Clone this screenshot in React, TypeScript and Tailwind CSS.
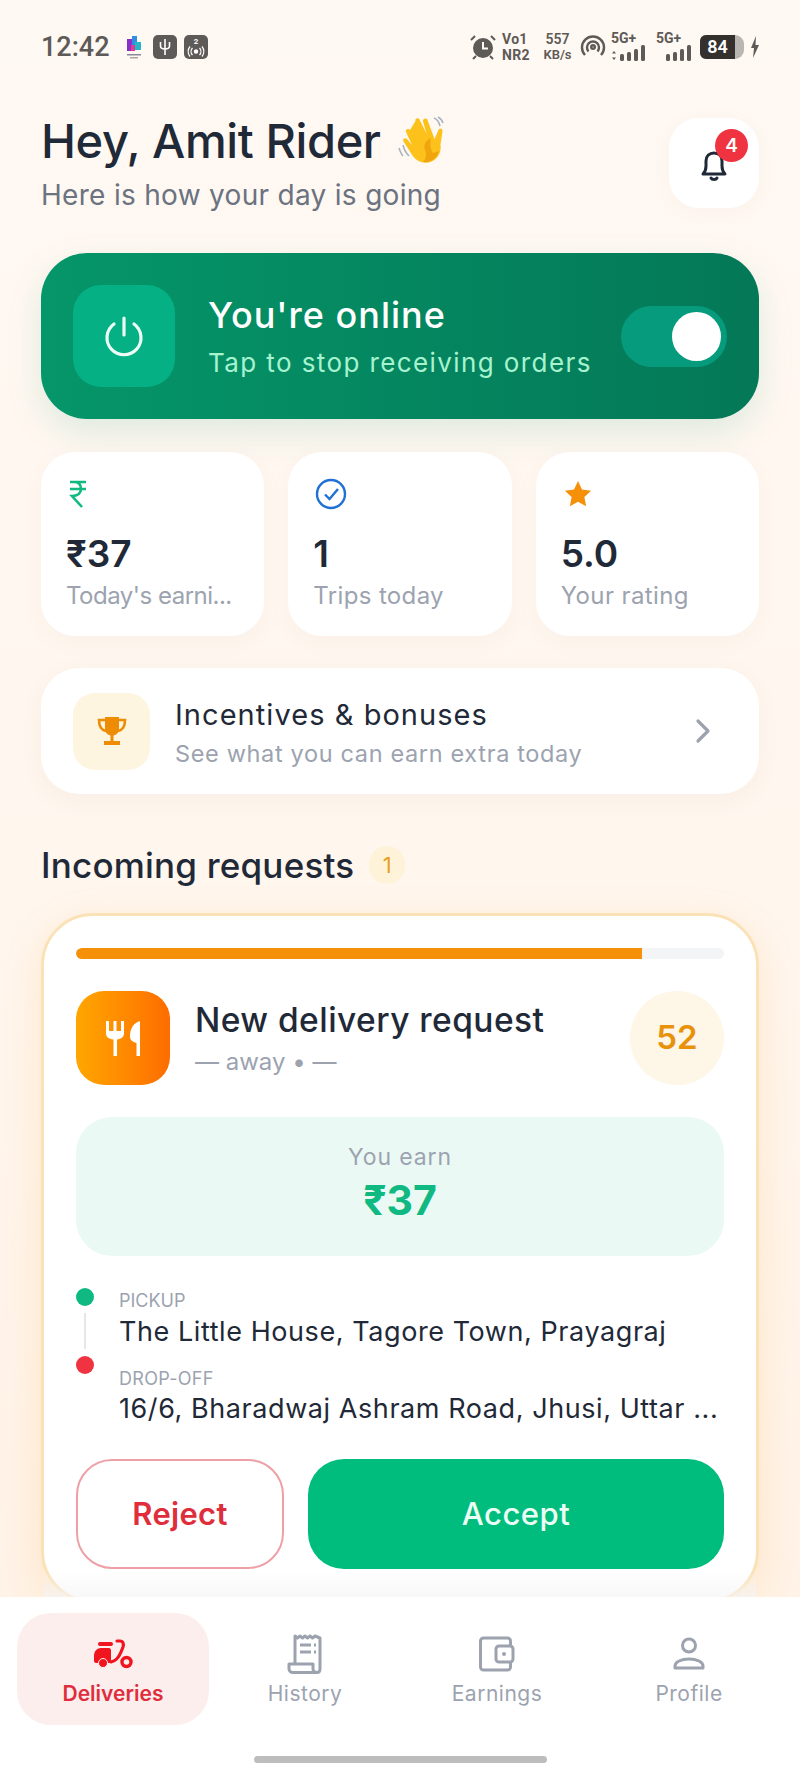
import React from "react";

const StatusBar = () => (
  <div className="flex h-[92px] shrink-0 items-center justify-between pl-[41px] pr-[40px] pt-[2px] text-[#5e5a57] font-['Roboto',sans-serif]">
    <div className="flex items-center">
      <span className="w-[84px] text-[27px] font-medium leading-none">12:42</span>
      <svg width="20" height="24" viewBox="0 0 20 24" className="ml-[-1px]">
        <rect x="3" y="4" width="5" height="12" fill="#8b2fc9" />
        <rect x="8" y="1" width="5" height="9" fill="#2f8fe0" />
        <rect x="11" y="7" width="6" height="8" fill="#27b5c9" />
        <rect x="7" y="10" width="4" height="6" fill="#e23a8f" />
        <rect x="3" y="19" width="14" height="1.5" fill="#8a8a9a" />
        <rect x="6" y="22" width="8" height="1.5" fill="#b0a0a0" />
      </svg>
      <div className="ml-[9px] flex h-[24px] w-[24px] items-center justify-center rounded-[5px] bg-[#5e5a57]">
        <svg width="14" height="18" viewBox="0 0 14 18" fill="none" stroke="#fff" strokeWidth="1.6">
          <path d="M7 1v16M2.5 4v4c0 2 2 3 4.500 3s4.500-1 4.500-3V4" />
        </svg>
      </div>
      <div className="ml-[7px] flex h-[24px] w-[24px] flex-col items-center justify-center rounded-[5px] bg-[#5e5a57]">
        <span className="text-[8px] font-bold leading-[8px] text-white">2</span>
        <svg width="18" height="11" viewBox="0 0 18 11" fill="none" stroke="#fff" strokeWidth="1.3">
          <circle cx="9" cy="5.5" r="1.6" fill="#fff" />
          <path d="M5.500 2a5 5 0 0 0 0 7M12.500 2a5 5 0 0 1 0 7M3 0.500a8 8 0 0 0 0 10M15 0.500a8 8 0 0 1 0 10" />
        </svg>
      </div>
    </div>
    <div className="flex items-center">
      <svg width="26" height="26" viewBox="0 0 26 26" fill="#5e5a57">
        <circle cx="13" cy="14" r="10" />
        <path d="M13 8v6.500h5" fill="none" stroke="#fff9f3" strokeWidth="2" />
        <path d="M1 6l4-4M25 6l-4-4M6 22l-3 3M20 22l3 3" stroke="#5e5a57" strokeWidth="2" />
      </svg>
      <div className="ml-[6px] flex w-[30px] flex-col text-[14px] font-bold leading-[16px] tracking-[0.3px]">
        <span>Vo1</span>
        <span>NR2</span>
      </div>
      <div className="ml-[11px] flex w-[29px] flex-col text-center text-[13px] font-semibold leading-[16px]">
        <span className="text-[14px]">557</span>
        <span>KB/s</span>
      </div>
      <svg width="26" height="26" viewBox="0 0 26 26" fill="none" stroke="#5e5a57" strokeWidth="2.4" className="ml-[8px]">
        <path d="M5 21a11 11 0 1 1 16 0" />
        <path d="M8.500 17.500a6 6 0 1 1 9 0" />
        <circle cx="13" cy="13" r="1.8" />
      </svg>
      <div className="ml-[5px] flex w-[38px] flex-col">
        <span className="text-[14px] font-bold leading-[13px]">5G+</span>
        <svg width="38" height="17" viewBox="0 0 38 17" fill="#5e5a57">
          <path d="M3 6l2 2.500H1zM3 15l-2-2.500h4z" />
          <rect x="9" y="9" width="4" height="7" rx="1.5" />
          <rect x="16" y="7" width="4" height="9" rx="1.5" />
          <rect x="23" y="4" width="4" height="12" rx="1.5" />
          <rect x="30" y="0" width="4" height="16" rx="1.5" />
        </svg>
      </div>
      <div className="ml-[7px] flex w-[38px] flex-col">
        <span className="text-[14px] font-bold leading-[13px]">5G+</span>
        <svg width="38" height="17" viewBox="0 0 38 17" fill="#5e5a57">
          <rect x="10" y="9" width="4" height="7" rx="1.5" />
          <rect x="17" y="7" width="4" height="9" rx="1.5" />
          <rect x="24" y="4" width="4" height="12" rx="1.5" />
          <rect x="31" y="0" width="4" height="16" rx="1.5" />
        </svg>
      </div>
      <div className="ml-[6px] flex h-[24px] w-[44px] overflow-hidden rounded-l-[6px] rounded-r-[9px] bg-[#b9b5b1]">
        <div className="flex w-[35px] items-center justify-center bg-[#33302e] text-[18px] font-semibold leading-none text-white">84</div>
      </div>
      <svg width="10" height="24" viewBox="0 0 10 24" fill="#5e5a57" className="ml-[6px]">
        <path d="M6 1L1 13h3l-1 10 6-13H5.500z" />
      </svg>
    </div>
  </div>
);

const Wave = () => (
  <svg width="50" height="50" viewBox="0 0 50 50" className="ml-[16px]">
    <path d="M6 30c1 5 3 8 6 11M2 33c1 3 2 6 4 8" fill="none" stroke="#aab4c0" strokeWidth="1.6" />
    <path d="M37 3c3 1 5 4 6 8M41 2c2 1 4 3 5 6" fill="none" stroke="#aab4c0" strokeWidth="1.6" />
    <path
      d="M13 15c-1.500-2-5-.5-4 2l6 13-5-6c-2-2-5 0-3.500 2.500l9 14c4 6 12 9 19 6 7-3 10-10 9-17l2-13c.3-3-3-4-4-1.500l-4 9-7-19c-1-2.500-5-1.500-4.500 1.500l3.500 12-7-14c-1-2.500-5-1-4 1.500z"
      fill="#fcc21b"
    />
    <path d="M34 23c-5 2-8 7-6 12 2 5 1 9-2 12 8 1 14-4 16-11l-6 2c-3-4-3-10-2-15z" fill="#f0a50f" />
  </svg>
);

const Stat = ({ icon, value, label, labelClass }: { icon: React.ReactNode; value: string; label: string; labelClass: string }) => (
  <div className="h-[184px] min-w-0 rounded-[34px] bg-white pl-[25px] pt-[27px] shadow-[0_6px_24px_rgba(120,80,40,0.04)]">
    <div className="flex h-[30px] items-center">{icon}</div>
    <div className="mt-[22px] text-[37px] font-semibold leading-[46px] text-[#1f2937]">{value}</div>
    <div className={`mt-[3px] whitespace-nowrap text-[24px] leading-[32px] text-[#9ca3af] ${labelClass}`}>{label}</div>
  </div>
);

const NavItem = ({ icon, label, active }: { icon: React.ReactNode; label: string; active?: boolean }) => (
  <div className={`flex h-[112px] w-[192px] flex-col items-center rounded-[34px] pt-[22px] ${active ? "bg-[#fdeeee]" : ""}`}>
    <div className="flex h-[38px] items-center justify-center">{icon}</div>
    <span className={`mt-[7px] text-[21px] leading-[28px] ${active ? "font-semibold text-[#e02d3c]" : "tracking-[0.5px] text-[#9ca3af]"}`}>{label}</span>
  </div>
);

export default function App() {
  return (
    <div className="relative flex h-[1778px] w-[800px] flex-col overflow-hidden bg-gradient-to-b from-[#fff9f3] via-[#fff6ee] to-[#fff1e4] font-['Inter',sans-serif]">
      <StatusBar />

      <main className="min-h-0 flex-1 overflow-hidden px-[41px]">
        {/* Header */}
        <div className="mt-[26px] flex h-[90px] items-start justify-between">
          <div className="mt-[-6px]">
            <div className="flex h-[56px] items-center">
              <h1 className="text-[47px] font-medium leading-none tracking-[-0.4px] text-[#1f2937]">Hey, Amit Rider</h1>
              <Wave />
            </div>
            <p className="mt-[9px] text-[28px] leading-[36px] tracking-[0.3px] text-[#6b7280]">Here is how your day is going</p>
          </div>
          <div className="relative flex h-[90px] w-[90px] items-center justify-center rounded-[30px] bg-white shadow-[0_4px_20px_rgba(120,80,40,0.04)]">
            <svg width="32" height="36" viewBox="0 0 32 36" fill="none" stroke="#1f2937" strokeWidth="3" className="mt-[4px]">
              <path d="M5 27c2-2 3-4 3-8v-5c0-5 3.500-8 8-8s8 3 8 8v5c0 4 1 6 3 8z" strokeLinejoin="round" />
              <path d="M13 31c1 2 5 2 6 0" strokeLinecap="round" />
            </svg>
            <span className="absolute left-[46px] top-[11px] flex h-[33px] w-[33px] items-center justify-center rounded-full bg-[#ef3340] text-[19px] font-semibold leading-none text-white">4</span>
          </div>
        </div>

        {/* Online toggle */}
        <div className="mt-[45px] flex h-[166px] items-center rounded-[46px] bg-gradient-to-r from-[#059669] to-[#047857] pl-[32px] pr-[32px] shadow-[0_14px_36px_rgba(5,150,105,0.13)]">
          <div className="flex h-[102px] w-[102px] items-center justify-center rounded-[28px] bg-[#06b085]">
            <svg width="44" height="44" viewBox="0 0 44 44" fill="none" stroke="#ecfdf5" strokeWidth="3.2" strokeLinecap="round">
              <path d="M22 4v17" />
              <path d="M12 10a17 17 0 1 0 20 0" />
            </svg>
          </div>
          <div className="ml-[33px] flex-1">
            <div className="text-[36px] font-medium leading-[44px] tracking-[1px] text-white">You're online</div>
            <div className="mt-[9px] text-[26px] leading-[34px] tracking-[1.4px] text-[#a7f3d0]">Tap to stop receiving orders</div>
          </div>
          <div className="flex h-[61px] w-[106px] items-center justify-end rounded-full bg-[#079b7d] pr-[6px]">
            <div className="h-[49px] w-[49px] rounded-full bg-white" />
          </div>
        </div>

        {/* Stats */}
        <div className="mt-[33px] grid grid-cols-3 gap-[24px]">
          <Stat
            value="₹37"
            label="Today's earni..."
            labelClass="tracking-[-0.5px]"
            icon={
              <svg width="20" height="30" viewBox="0 0 20 30" fill="none" stroke="#10b981" strokeWidth="2.6" className="ml-[2px]">
                <path d="M2 3h16M2 10h16M6 3c5 0 7 3 7 7s-3 7-9 7l10 11" />
              </svg>
            }
          />
          <Stat
            value="1"
            label="Trips today"
            labelClass="tracking-[0.35px]"
            icon={
              <svg width="32" height="32" viewBox="0 0 32 32" fill="none" stroke="#2170d6" strokeWidth="2.4" className="ml-[2px]">
                <circle cx="16" cy="16" r="14" />
                <path d="M10 16.500l4.500 4.500L23 11" />
              </svg>
            }
          />
          <Stat
            value="5.0"
            label="Your rating"
            labelClass="tracking-[0.4px]"
            icon={
              <svg width="30" height="30" viewBox="0 0 24 24" fill="#f59008" className="ml-[2px]">
                <path d="M12 1.500l3.200 6.900 7.300.9-5.400 5.100 1.400 7.400L12 18.200l-6.500 3.600 1.400-7.400L1.500 9.300l7.300-.9z" />
              </svg>
            }
          />
        </div>

        {/* Incentives */}
        <div className="mt-[32px] flex h-[126px] items-center rounded-[38px] bg-white pl-[32px] pr-[48px] shadow-[0_6px_24px_rgba(120,80,40,0.05)]">
          <div className="flex h-[77px] w-[77px] items-center justify-center rounded-[22px] bg-[#fef5e0]">
            <svg width="32" height="32" viewBox="0 0 32 32" fill="#ee8c06">
              <path d="M9 2h14v12c0 4-3 6.500-7 6.500S9 18 9 14z" />
              <path d="M9 5H3c0 6 2 10 7 11M23 5h6c0 6-2 10-7 11" fill="none" stroke="#ee8c06" strokeWidth="2.600" />
              <rect x="14.500" y="20" width="3" height="6" />
              <rect x="8" y="26" width="16" height="4" />
            </svg>
          </div>
          <div className="ml-[25px] flex-1 pt-[3px]">
            <div className="text-[29px] leading-[38px] tracking-[1.05px] text-[#1f2937]">Incentives &amp; bonuses</div>
            <div className="mt-[4px] text-[23.500px] leading-[32px] tracking-[0.65px] text-[#9ca3af]">See what you can earn extra today</div>
          </div>
          <svg width="16" height="26" viewBox="0 0 16 26" fill="none" stroke="#9ca3af" strokeWidth="3.2" strokeLinecap="round" strokeLinejoin="round">
            <path d="M3 3l10 10-10 10" />
          </svg>
        </div>

        {/* Requests */}
        <div className="mt-[52px] flex h-[38px] items-center">
          <h2 className="text-[35px] font-medium leading-none tracking-[0.2px] text-[#1f2937]">Incoming requests</h2>
          <span className="ml-[15px] flex h-[38px] w-[36px] items-center justify-center rounded-full bg-[#fef3d8] text-[22px] leading-none text-[#e8a020]">1</span>
        </div>

        <div className="mt-[29px] h-[690px] rounded-[52px] border-[3px] border-[#fbe2b6] bg-white px-[32px] pt-[32px] shadow-[0_10px_40px_rgba(245,158,11,0.14)]">
          <div className="h-[11px] overflow-hidden rounded-full bg-[#f3f4f6]">
            <div className="h-full w-[87.300%] rounded-l-full bg-[#f59008]" />
          </div>

          <div className="mt-[32px] flex items-center">
            <div className="flex h-[94px] w-[94px] items-center justify-center rounded-[28px] bg-gradient-to-r from-[#ffa600] to-[#fd6c00]">
              <svg width="34" height="35" viewBox="0 0 34 35" fill="#fff">
                <path d="M0 0h3v10h4.500V0h3v10H15V0h3v12c0 4-2.500 6-7 6.500V35H7.500V18.500C2.500 18 0 16 0 12z" />
                <path d="M34 0v35h-3.500V22c-4-1-7-3-6.500-8 .5-6 3-12 10-14z" />
              </svg>
            </div>
            <div className="ml-[25px] flex-1">
              <div className="text-[33.500px] font-medium leading-[44px] tracking-[0.45px] text-[#1f2937]">New delivery request</div>
              <div className="mt-[4px] text-[24px] leading-[32px] text-[#9ca3af]">— away • —</div>
            </div>
            <div className="flex h-[94px] w-[94px] items-center justify-center rounded-full bg-[#fef6e7] pb-[2px] text-[33px] font-semibold leading-none text-[#e8920c]">52</div>
          </div>

          <div className="mt-[32px] flex h-[139px] flex-col items-center justify-center rounded-[36px] bg-[#ebf9f5] pb-[6px]">
            <div className="text-[23px] leading-[30px] tracking-[0.9px] text-[#9ca3af]">You earn</div>
            <div className="mt-[3px] text-[41px] font-bold leading-[50px] text-[#10b981]">₹37</div>
          </div>

          {/* Route */}
          <div className="relative mt-[31px] pl-[43px] pt-[2px]">
            <div className="absolute left-0 top-[1px] h-[18px] w-[18px] rounded-full bg-[#10b981]" />
            <div className="absolute left-[8px] top-[26px] h-[36px] w-[2px] bg-[#e5e7eb]" />
            <div className="absolute left-0 top-[69px] h-[18px] w-[18px] rounded-full bg-[#ef3340]" />
            <div className="text-[18px] leading-[24px] text-[#9ca3af]">PICKUP</div>
            <div className="mt-[1px] text-[27px] leading-[36px] tracking-[0.57px] text-[#1f2937]">The Little House, Tagore Town, Prayagraj</div>
            <div className="mt-[17px] text-[18px] leading-[24px] tracking-[0.3px] text-[#9ca3af]">DROP-OFF</div>
            <div className="whitespace-nowrap text-[27px] leading-[36px] tracking-[0.57px] text-[#1f2937]">16/6, Bharadwaj Ashram Road, Jhusi, Uttar ...</div>
          </div>

          <div className="mt-[32px] flex gap-[24px]">
            <button className="h-[110px] w-[208px] rounded-[36px] border-2 border-[#eea0a6] bg-white text-[31px] font-semibold tracking-[0.3px] text-[#e02d3c]">Reject</button>
            <button className="h-[110px] flex-1 rounded-[36px] bg-[#00bd7e] text-[31px] font-medium tracking-[0.5px] text-[#ecfdf5]">Accept</button>
          </div>
        </div>
      </main>

      {/* fade above the tab bar */}
      <div className="pointer-events-none absolute bottom-[181px] left-[44px] right-[44px] h-[27px] bg-gradient-to-b from-transparent to-[#f5f5f5]/70" />

      {/* Bottom nav */}
      <nav className="flex h-[181px] shrink-0 flex-col bg-white">
        <div className="mt-[16px] grid grid-cols-4 gap-0 pl-[17px] pr-[15px]">
          <NavItem
            active
            label="Deliveries"
            icon={
              <svg width="40" height="32" viewBox="0 0 40 32" fill="none">
                <path d="M7 6h11" stroke="#f0141e" strokeWidth="4" strokeLinecap="round" />
                <path d="M1 18c0-5 3-8 7-8h8c1 0 2 1 2 2v11c0 1-1 2-2 2H3c-1 0-2-1-2-2z" fill="#f0141e" />
                <circle cx="10" cy="25" r="4.500" fill="#f0141e" stroke="#fdeeee" strokeWidth="1" />
                <path d="M24 3h3c3 0 4 3 3 6l-2 5c-2 5-5 9-10 10" stroke="#f0141e" strokeWidth="3.200" strokeLinecap="round" />
                <circle cx="33.500" cy="24" r="4.500" stroke="#f0141e" strokeWidth="3.400" />
              </svg>
            }
          />
          <NavItem
            label="History"
            icon={
              <svg width="36" height="40" viewBox="0 0 36 40" fill="none" stroke="#9ca3af" strokeWidth="3">
                <path d="M8 30V2l2.500 2 2.500-2 2.500 2L18 2l2.500 2L23 2l2.500 2L28 2l5 2v31c0 2-1 3.500-3 3.500" strokeLinejoin="round" />
                <path d="M2 30h24v5c0 2 2 3.500 4 3.500H6c-2 0-4-1.500-4-3.500z" strokeLinejoin="round" />
                <path d="M13 11h11M13 18h11M27 11h2M27 18h2" strokeWidth="2.800" />
              </svg>
            }
          />
          <NavItem
            label="Earnings"
            icon={
              <svg width="36" height="36" viewBox="0 0 36 36" fill="none" stroke="#9ca3af" strokeWidth="3">
                <rect x="1.500" y="2" width="30" height="32" rx="3" />
                <rect x="17" y="10" width="17" height="16" rx="3" fill="#fff" />
                <circle cx="25" cy="18" r="2" fill="#9ca3af" stroke="none" />
              </svg>
            }
          />
          <NavItem
            label="Profile"
            icon={
              <svg width="32" height="34" viewBox="0 0 32 34" fill="none" stroke="#9ca3af" strokeWidth="3">
                <circle cx="16" cy="8.500" r="6.500" />
                <path d="M2 31v-2c0-4 6-7 14-7s14 3 14 7v2z" strokeLinejoin="round" />
              </svg>
            }
          />
        </div>
        <div className="mx-auto mt-[31px] h-[7px] w-[293px] rounded-full bg-[#bdbdbd]" />
      </nav>
    </div>
  );
}
